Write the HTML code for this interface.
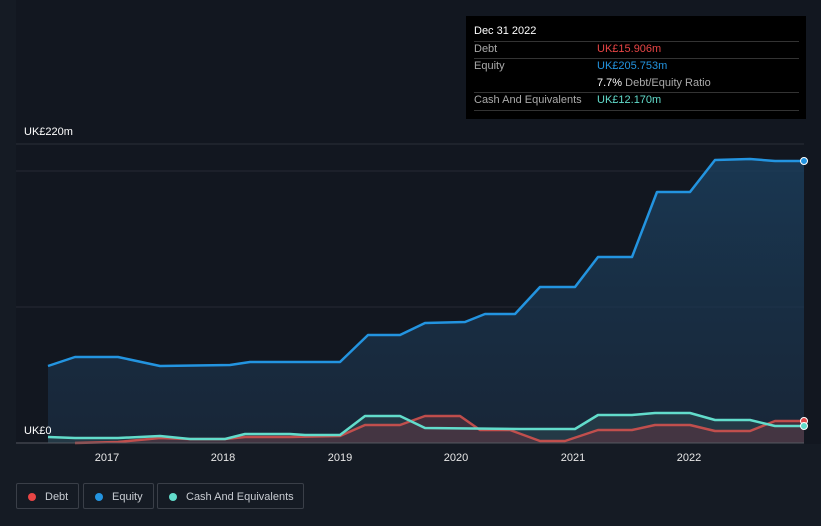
<!DOCTYPE html><html><head><style>
body{margin:0;width:821px;height:526px;background:#151b24;font-family:"Liberation Sans",sans-serif;overflow:hidden;position:relative}
.tt{position:absolute;left:466px;top:16px;width:340px;height:103px;background:#000;color:#fff;font-size:11px}
.row{position:absolute;left:8px;width:325px;border-top:1px solid #333}
.lg{position:absolute;top:483px;height:26px;border:1px solid #3a3f48;border-radius:2px;color:#c8ccd2;font-size:11px;line-height:26px;box-sizing:border-box;padding-left:28px}
.lg i{position:absolute;left:11px;top:9px;width:8px;height:8px;border-radius:50%}
</style></head><body>
<svg width="821" height="526" style="position:absolute;left:0;top:0">
<defs><linearGradient id="g" x1="0" y1="0" x2="0" y2="1"><stop offset="0" stop-color="#1b3f5e" stop-opacity=".8"/><stop offset="1" stop-color="#1b3047" stop-opacity=".6"/></linearGradient></defs>
<rect x="16" y="0" width="805" height="444" fill="#121720"/>
<line x1="16" y1="144" x2="804" y2="144" stroke="#2a2f38"/>
<line x1="16" y1="171" x2="804" y2="171" stroke="#252a33"/>
<line x1="16" y1="307" x2="804" y2="307" stroke="#252a33"/>
<polygon fill="url(#g)" points="48,443 48,366 75,357 118,357 160,366 230,365 250,362 340,362 368,335 400,335 425,323 465,322 485,314 515,314 540,287 575,287 598,257 632,257 657,192 690,192 715,160 750,159 775,161 804,161 804,443"/>
<polygon fill="#2d4650" opacity=".6" points="48,443 48,437 75,438 118,438 160,436 190,439 225,439 245,434 290,434 305,435 340,435 365,416 400,416 425,428 520,429 575,429 598,415 632,415 655,413 690,413 715,420 750,420 775,426 804,426 804,443"/>
<polygon fill="#5a3440" opacity=".6" points="75,443 118,442 160,438 190,439 225,439 245,437 290,437 340,436 365,425 400,425 425,416 460,416 480,430 510,430 540,441 565,441 598,430 632,430 655,425 690,425 715,431 750,431 775,421 804,421 804,443"/>
<g fill="none" stroke-width="2.5" stroke-linejoin="round">
<polyline stroke="#2394e0" points="48,366 75,357 118,357 160,366 230,365 250,362 340,362 368,335 400,335 425,323 465,322 485,314 515,314 540,287 575,287 598,257 632,257 657,192 690,192 715,160 750,159 775,161 804,161"/>
<polyline stroke="#d9534f" opacity=".85" points="75,443 118,442 160,438 190,439 225,439 245,437 290,437 340,436 365,425 400,425 425,416 460,416 480,430 510,430 540,441 565,441 598,430 632,430 655,425 690,425 715,431 750,431 775,421 804,421"/>
<polyline stroke="#62dccb" points="48,437 75,438 118,438 160,436 190,439 225,439 245,434 290,434 305,435 340,435 365,416 400,416 425,428 520,429 575,429 598,415 632,415 655,413 690,413 715,420 750,420 775,426 804,426"/>
</g>
<line x1="16" y1="443" x2="804" y2="443" stroke="#555a62"/>
<circle cx="804" cy="161" r="3.5" fill="#2394e0" stroke="#fff"/>
<circle cx="804" cy="421" r="3.5" fill="#e04848" stroke="#fff"/>
<circle cx="804" cy="426" r="3.5" fill="#62dccb" stroke="#fff"/>
<g fill="#fff" font-size="11" font-family="Liberation Sans">
<text x="24" y="135">UK£220m</text><text x="24" y="434">UK£0</text>
<g text-anchor="middle" fill="#e8e8e8"><text x="107" y="461">2017</text><text x="223" y="461">2018</text><text x="340" y="461">2019</text><text x="456" y="461">2020</text><text x="573" y="461">2021</text><text x="689" y="461">2022</text></g>
</g>
</svg>
<div class="tt">
<div style="position:absolute;left:8px;top:9px">Dec 31 2022</div>
<div class="row" style="top:25px"></div>
<div style="position:absolute;left:8px;top:27px;color:#aaa">Debt</div><div style="position:absolute;left:131px;top:27px;color:#e84545">UK£15.906m</div>
<div class="row" style="top:42px"></div>
<div style="position:absolute;left:8px;top:44px;color:#aaa">Equity</div><div style="position:absolute;left:131px;top:44px;color:#2394e0">UK£205.753m</div>
<div style="position:absolute;left:131px;top:61px;color:#aaa"><b style="color:#fff;font-weight:normal">7.7%</b> Debt/Equity Ratio</div>
<div class="row" style="top:76px"></div>
<div style="position:absolute;left:8px;top:78px;color:#aaa">Cash And Equivalents</div><div style="position:absolute;left:131px;top:78px;color:#62dccb">UK£12.170m</div>
<div class="row" style="top:94px"></div>
</div>
<div class="lg" style="left:16px;width:63px"><i style="background:#e84545"></i>Debt</div>
<div class="lg" style="left:83px;width:71px"><i style="background:#2394e0"></i>Equity</div>
<div class="lg" style="left:157px;width:147px"><i style="background:#62dccb"></i>Cash And Equivalents</div>
</body></html>
